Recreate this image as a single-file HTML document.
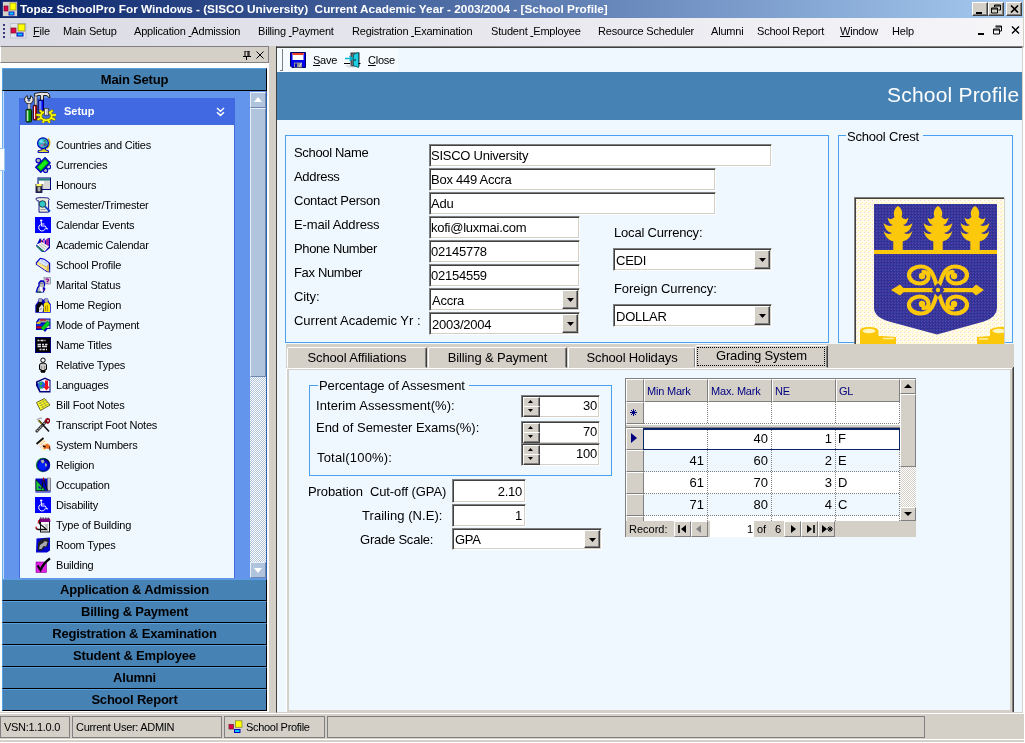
<!DOCTYPE html>
<html>
<head>
<meta charset="utf-8">
<title>Topaz SchoolPro</title>
<style>
*{box-sizing:border-box;margin:0;padding:0}
html,body{width:1025px;height:743px;overflow:hidden;background:#fff}
body{font-family:"Liberation Sans",sans-serif;font-size:11px;color:#000;position:relative}
.a{position:absolute}
.t{position:absolute;white-space:nowrap;line-height:1}
u{text-decoration:underline}
#win{left:0;top:0;width:1024px;height:742px;background:#d4d0c8;will-change:transform}
#title{left:0;top:0;width:1023px;height:18px;background:linear-gradient(90deg,#0a246a 0%,#a6caf0 100%)}
#title .t{color:#fff;font-weight:bold;font-size:11.8px;top:4px}
.wb{position:absolute;top:2px;width:16px;height:14px;background:#d4d0c8;border:1px solid;border-color:#fff #404040 #404040 #fff;box-shadow:inset -1px -1px 0 #808080}
#menu{left:0;top:18px;width:1023px;height:28px;background:linear-gradient(90deg,#dbdbe5 0%,#f6f5f8 100%)}
#menu .t{top:8px;font-size:11px;letter-spacing:-.2px}
/* left dock */
#dockhdr{left:0;top:46px;width:269px;height:17px;background:#d4d0c8;border:1px solid;border-color:#808080 #808080 #808080 #fff}
.nb{position:absolute;left:4px;width:263px;height:22px;background:#4682b4;border:1px solid;border-color:#5aa0e0 #000 #000 #5aa0e0;text-align:center;font-weight:bold;font-size:13px;line-height:19px;letter-spacing:-.2px}
.li{position:absolute;left:56px;font-size:11px;white-space:nowrap;line-height:1;letter-spacing:-.2px;margin-top:1px}
.ic{position:absolute;left:35px;width:16px;height:16px}
/* form */
.lb{position:absolute;white-space:nowrap;line-height:1;font-size:13px}
.tb{position:absolute;background:#fff;border:1px solid;border-color:#808080 #fff #fff #808080;box-shadow:inset 1px 1px 0 #404040,inset -1px -1px 0 #d4d0c8;height:23px;font-size:13px;line-height:20px;padding:1px 1px 0 1px;white-space:nowrap;overflow:hidden;letter-spacing:-.25px}
.tb.cb{line-height:22px;padding-left:2px}
.tb.r{text-align:right;padding-right:3px}
.dd{position:absolute;right:1px;top:1px;width:16px;height:19px;background:#d4d0c8;border:1px solid;border-color:#fff #404040 #404040 #fff;box-shadow:inset -1px -1px 0 #808080}
.dd:after{content:"";position:absolute;left:4px;top:7px;width:7px;height:4px;background:#000;clip-path:polygon(0 0,100% 0,50% 100%)}
.gb{position:absolute;border:1px solid #4aa0ee}
.gb>span{position:absolute;top:-8px;background:#f0f8ff;font-size:13px;line-height:1;padding:0 1px;white-space:nowrap}
.tab{position:absolute;top:347px;height:21px;background:#d4d0c8;border:1px solid;border-color:#fff #404040 transparent #fff;border-radius:2px 2px 0 0;box-shadow:inset -1px 0 0 #808080;font-size:13px;text-align:center;line-height:19px;white-space:nowrap;letter-spacing:-.15px}
.tab.sel{top:345px;height:23px;line-height:19px;z-index:2}
.tab.sel i{position:absolute;left:1px;top:1px;right:2px;bottom:1px;border:1px dotted #000}
.tb.nu{padding-left:17px;height:23px;line-height:18px;padding-right:2px}
.nu b{position:absolute;left:1px;top:1px;width:16px;height:18px}
.nu b:before,.nu b:after{content:"";position:absolute;left:0;width:15px;height:9px;background:#d4d0c8;border:1px solid;border-color:#fff #404040 #404040 #fff;box-shadow:inset -1px -1px 0 #808080}
.nu b:before{top:0}.nu b:after{top:9px}
.nu i{position:absolute;left:6px;width:5px;height:3px;background:#000;z-index:3}
.nu i.u{top:4px;clip-path:polygon(50% 0,100% 100%,0 100%)}.nu i.d{top:13px;clip-path:polygon(0 0,100% 0,50% 100%)}
.hd{position:absolute;left:644px;width:256px;height:1px;background:repeating-linear-gradient(90deg,#808080 0 1px,transparent 1px 2px)}
.vd{position:absolute;top:402px;width:1px;height:119px;background:repeating-linear-gradient(180deg,#808080 0 1px,transparent 1px 2px)}
.gh{position:absolute;top:379px;height:23px;background:#d4d0c8;border:1px solid;border-color:#fff #808080 #808080 #fff;color:#000080;font-size:11px;line-height:23px;padding-left:2px;white-space:nowrap;letter-spacing:-.2px}
.rs{position:absolute;left:626px;width:18px;background:#d4d0c8;border:1px solid;border-color:#fff #808080 #808080 #fff}
.gc{position:absolute;width:60px;text-align:right;font-size:13px;line-height:1}
.gl{position:absolute;font-size:13px;line-height:1}
.sb{position:absolute;width:16px;background:#d4d0c8;border:1px solid;border-color:#fff #808080 #808080 #fff}
.nvb{position:absolute;top:521px;width:17px;height:16px;background:#d4d0c8;border:1px solid;border-color:#fff #808080 #808080 #fff}
.sp{position:absolute;top:716px;height:22px;border:1px solid #808080;background:#d4d0c8}
.sp .t{font-size:11px;letter-spacing:-.3px}
</style>
</head>
<body>
<div id="win" class="a">

<!-- TITLE BAR -->
<div id="title" class="a">
  <svg class="a" style="left:2px;top:1px" width="16" height="16" viewBox="0 0 16 16">
    <rect x="0" y="0" width="16" height="16" fill="#d4d0c8"/>
    <rect x="0.5" y="0.5" width="15" height="15" fill="none" stroke="#2a3a80"/>
    <rect x="2" y="5" width="4" height="5" fill="#e0004c" stroke="#60002a" stroke-width=".6"/>
    <rect x="8" y="2" width="6" height="7" fill="#ffff00" stroke="#80801a" stroke-width=".6"/>
    <rect x="7" y="11" width="5" height="3" fill="#00c8ff" stroke="#0000c0" stroke-width=".8"/>
  </svg>
  <span class="t" style="left:20px">Topaz SchoolPro For Windows - (SISCO University)&nbsp; Current Academic Year - 2003/2004 - [School Profile]</span>
  <div class="wb" style="left:972px"><div class="a" style="left:3px;top:9px;width:6px;height:2px;background:#000"></div></div>
  <div class="wb" style="left:988px">
    <svg class="a" style="left:2px;top:1px" width="11" height="10" viewBox="0 0 11 10"><path d="M3.5 1h6v5h-2M3.5 2h6M3.5 1v2M.5 4h6v5h-6zM.5 5h6" fill="none" stroke="#000" stroke-width="1"/></svg>
  </div>
  <div class="wb" style="left:1006px">
    <svg class="a" style="left:3px;top:2px" width="9" height="8" viewBox="0 0 9 8"><path d="M1 .5l7 7M8 .5l-7 7" stroke="#000" stroke-width="1.6"/></svg>
  </div>
</div>

<!-- MENU BAR -->
<div id="menu" class="a">
  <div class="a" style="left:3px;top:6px;width:2px;height:14px;background:repeating-linear-gradient(180deg,#3a3a7a 0 2px,transparent 2px 4px)"></div><div class="a" style="left:4px;top:7px;width:2px;height:14px;background:repeating-linear-gradient(180deg,#fff 0 2px,transparent 2px 4px);z-index:-1"></div>
  <svg class="a" style="left:10px;top:5px" width="17" height="16" viewBox="0 0 17 16">
    <rect x=".5" y=".5" width="15.500" height="14.500" fill="#e4e4ec" stroke="#c4c4d0" stroke-width="1"/>
    <rect x="1" y="5" width="5" height="5" fill="#e0004c" stroke="#7a2030" stroke-width=".8"/>
    <rect x="8" y="1" width="7" height="7" fill="#ffff00" stroke="#8a8a30" stroke-width=".8"/>
    <rect x="7" y="10" width="6" height="3" fill="#00c8ff" stroke="#0000c0" stroke-width="1"/>
  </svg>
  <span class="t" style="left:33px"><u>F</u>ile</span>
  <span class="t" style="left:63px">Main Setup</span>
  <span class="t" style="left:134px">Application <u>&nbsp;</u>Admission</span>
  <span class="t" style="left:258px">Billing <u>&nbsp;</u>Payment</span>
  <span class="t" style="left:352px">Registration <u>&nbsp;</u>Examination</span>
  <span class="t" style="left:491px">Student <u>&nbsp;</u>Employee</span>
  <span class="t" style="left:598px">Resource Scheduler</span>
  <span class="t" style="left:711px">Alumni</span>
  <span class="t" style="left:757px">School Report</span>
  <span class="t" style="left:840px"><u>W</u>indow</span>
  <span class="t" style="left:892px">Help</span>
  <div class="a" style="left:978px;top:15px;width:6px;height:2px;background:#000"></div>
  <svg class="a" style="left:993px;top:7px" width="10" height="10" viewBox="0 0 10 10"><path d="M2.5 1h6v5h-2M2.5 2h6M.5 4h6v5h-6zM.5 5h6" fill="none" stroke="#000" stroke-width="1"/></svg>
  <svg class="a" style="left:1011px;top:8px" width="9" height="8" viewBox="0 0 9 8"><path d="M1 .5l7 7M8 .5l-7 7" stroke="#000" stroke-width="1.4"/></svg>
</div>

<!-- LEFT DOCK -->
<div id="dockhdr" class="a"></div>
<svg width="0" height="0" style="position:absolute"><defs>
<symbol id="wc" viewBox="0 0 16 16"><rect width="16" height="16" fill="#0000ff"/><circle cx="6.2" cy="3.6" r="1.2" fill="#fff"/><path d="M6.3 5v4h4l1.6 3.2l1.2-.6M6.3 7h3" fill="none" stroke="#fff" stroke-width="1"/><path d="M5.4 7.6a3.4 3.4 0 1 0 5 3.6" fill="none" stroke="#fff" stroke-width="1"/></symbol>
<symbol id="i0" viewBox="0 0 16 16"><path d="M3 15.600h10.500v-1.800l-3-1v-2h-3.500v2l-4 1z" fill="#c8c400" stroke="#0000c0" stroke-width="1"/><path d="M4.500 14.300h7" stroke="#f0f060" stroke-width=".8"/><path d="M13 1.500a6.500 6.500 0 0 1-1.500 10" fill="none" stroke="#c8b000" stroke-width="1.600"/><circle cx="8" cy="6.200" r="5.400" fill="#28b4bc" stroke="#0000c0" stroke-width="1.200"/><circle cx="6.200" cy="4.300" r="1.700" fill="#70e0f8"/><circle cx="10" cy="7.600" r="1.700" fill="#585878"/><circle cx="6.800" cy="8.400" r="1.200" fill="#d060c8"/><circle cx="10.200" cy="3.800" r="1" fill="#408858"/><circle cx="8.500" cy="5.800" r=".8" fill="#e8a0e0"/></symbol>
<symbol id="i1" viewBox="0 0 16 16"><circle cx="3.300" cy="3.600" r="2.300" fill="#b0b0b0" stroke="#0000c0" stroke-width="1.100"/><circle cx="13.600" cy="9.800" r="2.100" fill="#c8c8c8" stroke="#0000c0" stroke-width="1.100"/><circle cx="10.600" cy="13.500" r="2.100" fill="#b0b0b0" stroke="#0000c0" stroke-width="1.100"/><path d="M10 .8L15 5.800L5.800 15.200L.8 10.200z" fill="#00b400" stroke="#0000c0" stroke-width="1.500"/><path d="M10 3.400L12.400 5.800L5.800 12.600L3.400 10.200z" fill="#18f018"/></symbol>
<symbol id="i2" viewBox="0 0 16 16"><rect x="3" y="1" width="12.5" height="11.5" fill="#d8d8d8" stroke="#000080" stroke-width="1"/><rect x="3.5" y="1.5" width="11.5" height="2" fill="#208080"/><rect x="4" y="4" width="5" height="3" fill="#fff"/><rect x="1" y="7.5" width="6" height="8" fill="#303040" stroke="#000040" stroke-width=".8"/><rect x="1.3" y="7" width="5.4" height="2.2" fill="#ffff60"/><path d="M2.5 11h3M2.5 13h3M4 10v4.5" stroke="#e0e0e0" stroke-width=".9"/></symbol>
<symbol id="i3" viewBox="0 0 16 16"><path d="M1 1.5c2-1.4 9-.8 12-.5c1.4.4 1.5 2 .6 2.6v11.600h-9.600v-11.200c-1.5.2-3-.5-3-2.500z" fill="#ececdc" stroke="#000080" stroke-width=".9"/><circle cx="7.5" cy="7" r="3.3" fill="#30c8c8" stroke="#203040" stroke-width=".9"/><path d="M10 9.500l5 5" stroke="#1040d0" stroke-width="1.8"/><path d="M5.5 12.500h5" stroke="#888" stroke-width=".8"/></symbol>
<symbol id="i4" viewBox="0 0 16 16"><use href="#wc"/></symbol>
<symbol id="i5" viewBox="0 0 16 16"><path d="M5 1l2 3l2-3l2 3l2-3h2v10l-5 4h-3l-6-6l1-2z" fill="#0000c0"/><path d="M6 2l1.5 4l-2 2z" fill="#e04020"/><path d="M11 2.500l3-1.500v9l-3 1z" fill="#a020a0"/><path d="M8 3l2-1v6l-2 1z" fill="#d060d0"/><path d="M1.5 7.500l5.5-2.500l7 4.500l-4.5 5z" fill="#f4f4f0"/><path d="M2 8.500l7 5.500l-1 1l-6.5-5.500z" fill="#20a040"/><path d="M4 7.500l6 4.500M6 6.500l6 4" stroke="#a0a0a0" stroke-width=".7"/></symbol>
<symbol id="i6" viewBox="0 0 16 16"><path d="M.8 5.500L5 .8l4.500 1l5.700 4.200v9.500l-3.500-.5L.8 7.500z" fill="#0000c0"/><path d="M5.300 2l4 .8l4.500 3.500l-2 3.800L3 5z" fill="#dce8ff"/><path d="M6 3.500l6 3.500" stroke="#a8c0f0" stroke-width=".8"/><path d="M1.800 6l1.500-1.300l8.200 5.300l2.200-3.500l.5 8l-2.200-.2L1.800 7.300z" fill="#f8e27a"/><path d="M11.700 10l2-3.300l.5 7.800l-2.200-.2z" fill="#d4b848"/><path d="M2.500 7l8.500 5.800" stroke="#fff4b0" stroke-width=".8"/></symbol>
<symbol id="i7" viewBox="0 0 16 16"><rect x="9" y=".5" width="6.500" height="6.500" fill="#c8c8c8" stroke="#8888a8" stroke-width=".7"/><path d="M10.800 2.600q1.400-1.600 2.700 0q.2 1.200-1.300 2v.7M12.200 6v.6" stroke="#a000a0" stroke-width="1.200" fill="none"/><path d="M.5 15.600l1.500-5l1.300-1.800v-3l2-2.600h3.200l1.600 2.600v2.800l-.8 1.400l1.200 1.800l-1.700 3.800z" fill="#0000c0"/><path d="M2.200 15l1-4l1.500-1.500v-3l1.200-1.500h2l1 1.500v3l-1.500 2.500l1.200 1.200l-1.200 1.800z" fill="#b8b8b8"/><path d="M4.500 9.500l1.300 5.500h1.700v-4.500z" fill="#fff"/><path d="M5 6.500h3" stroke="#707070" stroke-width=".8"/><path d="M2 15h4.500" stroke="#004040" stroke-width="1.200"/><path d="M8.500 12.500l1.500 1" stroke="#a000a0" stroke-width="1"/></symbol>
<symbol id="i8" viewBox="0 0 16 16"><path d="M.3 15.700v-7.500l2.400-3.400l1-3.300h3.200l1.400 1.500l1.400-1.500h3.200l1 3.300l1.800 2.200v8.700z" fill="#0000c0"/><circle cx="5.300" cy="3.400" r="1.900" fill="#a8a8a8"/><circle cx="11.300" cy="3.400" r="1.900" fill="#a8a8a8"/><path d="M1.300 15v-6.500l2.600-3.200h3l1.600 2.700v7z" fill="#080808"/><path d="M4 11l3-3.800l1.600 3.300l-1 4.500h-3.600z" fill="#e8e8e8"/><path d="M4.500 12.500l2.500-1" stroke="#707070" stroke-width=".8"/><path d="M8.800 15v-8l1.500-1.700h2.700l2 2.700v7z" fill="#ffe400"/><path d="M12.300 8v6.500M10.500 9v5" stroke="#907000" stroke-width=".8"/></symbol>
<symbol id="i9" viewBox="0 0 16 16"><path d="M3.5 1.500h12v10.500h-3l-2.5 3l-1.5-2h-7.500v-8z" fill="#0000c0"/><path d="M4.5 2.500h10v3h-12z" fill="#a0a0a0"/><path d="M5 3h6" stroke="#e00000" stroke-width="1.2"/><rect x="1.5" y="5.2" width="4" height="1.6" fill="#ffe000"/><rect x="1.5" y="7.2" width="7" height="1.6" fill="#0030e0"/><rect x="1.5" y="9.4" width="6" height="2" fill="#e00000"/><rect x="10" y="8.5" width="4.5" height="2.5" fill="#c8c8c8"/><path d="M12.5 4l2.5 2.500l-6.5 7l-2.5-2.500z" fill="#00d020" stroke="#008000" stroke-width=".5"/></symbol>
<symbol id="i10" viewBox="0 0 16 16"><rect x=".5" y=".5" width="15" height="15" fill="#000" stroke="#000080"/><path d="M2.500 3.500h2M5.500 3.500h3M9.500 3.500h1M2.500 7.500h3.500M7 7.500h2M10 7.500h2.500M2.500 9.500h3.500M7 9.500h5M4.500 12.500h2M7.500 12.500h2.500M11 12.500h1" stroke="#e0e0e0" stroke-width="1.700"/></symbol>
<symbol id="i11" viewBox="0 0 16 16"><circle cx="8" cy="3.2" r="2.2" fill="#fff" stroke="#000" stroke-width="1"/><path d="M4.5 12.500v-4.500q0-2 3.5-2q3.5 0 3.5 2v4.500h-1.500v2.500h-4v-2.500z" fill="#c8c8c8" stroke="#000" stroke-width="1"/><rect x="6" y="13" width="4" height="2.5" fill="#000"/><path d="M6.5 9v4M9.5 9v4" stroke="#808080" stroke-width=".7"/></symbol>
<symbol id="i12" viewBox="0 0 16 16"><path d="M1 4.500l9-4l5.5 2.500v12.500h-11l-3.5-7z" fill="#000080"/><path d="M2.5 5.500l7.5-3.500l4.5 2v10h-9z" fill="#f4f4f4"/><circle cx="6.5" cy="8" r="3.6" fill="#2060e0"/><path d="M4 6.500q2-2 3.5-.5q-.5 2-2 2.500zM4.5 10q1.5-1 3 .5q-1 1.5-2.5 1z" fill="#20c040"/><path d="M10 3.500h3v6h1.800l-3.3 4l-3.3-4h1.800z" fill="#f01020"/></symbol>
<symbol id="i13" viewBox="0 0 16 16"><path d="M1.5 5.500l8-4l5.5 6.500l-9.5 5.500z" fill="#ffff20" stroke="#404020" stroke-width=".8"/><path d="M3.5 7l8-4.200M4.8 9l8.2-4.400M6 11l8.2-4.600M4.5 4.500l4 6.800M7.5 3l4.2 6.8" stroke="#909040" stroke-width=".7"/></symbol>
<symbol id="i14" viewBox="0 0 16 16"><path d="M1 15l10-10.5" stroke="#303030" stroke-width="2.6"/><path d="M1.8 14.200l9-9.5" stroke="#c0c0c0" stroke-width="1.2" stroke-dasharray="1.5 1"/><path d="M4 3.500l10 11" stroke="#101010" stroke-width="1.5"/><path d="M2 3q2.5-2.5 5-1.5" stroke="#b0b0b0" stroke-width="1.6" fill="none"/><path d="M3.5 3.500l3.5 3.5" stroke="#807000" stroke-width="1.2"/><path d="M10.5 2l2-1.200l2.5 1.200v3l-2 2l-2.5-1.200l-.8-2z" fill="#900010"/><circle cx="13" cy="3.8" r="1" fill="#e0d0d0"/></symbol>
<symbol id="i15" viewBox="0 0 16 16"><path d="M5.5 1.500l5 2l3 7l-5.5 4l-4.5-8z" fill="#fff0c0"/><path d="M1.5 7l7-6" stroke="#101010" stroke-width="1.8"/><path d="M4.5 9l5.5-5M5.5 10.500l3.5-3" stroke="#d060d0" stroke-width=".7" stroke-dasharray="1 1"/><path d="M8 9l4.5-2.500l3 2.500l-1 3l-3.5-.5l-2 1z" fill="#f07020"/><path d="M8 8.800l2.5 1.4" stroke="#101010" stroke-width="1.5"/><path d="M14.5 9.500l.5 4" stroke="#202020" stroke-width="1"/></symbol>
<symbol id="i16" viewBox="0 0 16 16"><circle cx="8" cy="8" r="7.2" fill="#108030"/><circle cx="8.6" cy="8" r="6.6" fill="#0000c0"/><circle cx="7.5" cy="9" r="4" fill="#0020ff"/><path d="M5.5 3.500l3-1l1 2.500l-1.5 1.500l-1.5-1zM10 6l2 1l-.5 3l-1.5-1z" fill="#b0b0a0"/><path d="M9 2q4 .5 5 4" stroke="#000030" stroke-width="1.2" fill="none"/></symbol>
<symbol id="i17" viewBox="0 0 16 16"><rect x=".5" y="1.5" width="15" height="14" fill="#0000c0"/><path d="M1 3v10.500h9.500z" fill="#20d040" stroke="#003000" stroke-width=".8"/><path d="M3.5 8.500v3h3z" fill="#0000c0"/><rect x="12.5" y="1" width="3" height="12.5" fill="#c8c8c8" stroke="#606060" stroke-width=".5"/><path d="M8.5 1.500l-2 11M8.5 1.500l4 12" stroke="#101010" stroke-width="1"/><path d="M8.5 .5v3" stroke="#c00000" stroke-width="1.2"/><path d="M1 14.500h14" stroke="#8080c0" stroke-width=".8"/></symbol>
<symbol id="i18" viewBox="0 0 16 16"><use href="#wc"/></symbol>
<symbol id="i19" viewBox="0 0 16 16"><rect x="5.5" y="4" width="9" height="11" fill="#f4f4f4" stroke="#101010" stroke-width="1"/><path d="M4.5 1.500h10.500l.5 3.500h-11.500z" fill="#800080"/><path d="M5 1l10 .2" stroke="#101010" stroke-width="1" stroke-dasharray="1.5 1"/><path d="M5 2.500q-2 3 1 5.500q3 2 5.5 4.500h-8.500q-2.5-1-1.5-2" fill="none" stroke="#101010" stroke-width="1.3"/><path d="M1.2 9.500q-.8 2 1.3 3M4 3l-1 3.5" stroke="#e00000" stroke-width="1" fill="none"/><path d="M9 7h4v6z" fill="#c0c0c0"/></symbol>
<symbol id="i20" viewBox="0 0 16 16"><path d="M1.5 1.500l13.5-1v13l-3 2h-11z" fill="#0000d0"/><path d="M3 6l3-3.500l6-1.500l2 2.500l-1.5 6l-3 1l-2.5 3h-4z" fill="#202028"/><path d="M5 8l3-2l2-2l2.5 1l-1.5 4.500l-2.5-.5l-2 3h-2.500z" fill="#a8a8b0"/></symbol>
<symbol id="i21" viewBox="0 0 16 16"><rect x="1" y="5" width="10.5" height="10.5" fill="#e020e0" stroke="#8000a0" stroke-width=".6"/><path d="M2.5 8.500l3 4.500q3-7 9.5-11.5" fill="none" stroke="#000" stroke-width="2.2"/></symbol>
</defs></svg>
<div class="a" style="left:0;top:63px;width:269px;height:649px;background:#fff"></div>
<!-- dock header icons -->
<svg class="a" style="left:243px;top:51px" width="8" height="9" viewBox="0 0 8 9"><path d="M1.5 0h5M2 0v5M5 0v5M6 0v5M0 5.500h8M3.5 6v3" stroke="#000" stroke-width="1" fill="none"/></svg>
<svg class="a" style="left:256px;top:51px" width="8" height="8" viewBox="0 0 8 8"><path d="M.5 .5l7 7M7.5 .5l-7 7" stroke="#000" stroke-width="1"/></svg>
<!-- nav -->
<div class="nb" style="top:68px;left:2px;width:265px;height:23px;line-height:22px">Main Setup</div>
<div class="a" style="left:2px;top:91px;width:265px;height:488px;background:#6495ed;border-left:1px solid #6ab0f0;border-right:1px solid #3060b0"></div><div class="a" style="left:3px;top:91px;width:1px;height:488px;background:#c4dcf8"></div>
<div class="a" style="left:19px;top:98px;width:216px;height:27px;background:#4169e1"></div>
<div class="a" style="left:19px;top:125px;width:216px;height:453px;background:#f0f8ff;border:solid #4169e1;border-width:0 1px"></div>
<div class="a" style="left:0;top:148px;width:5px;height:23px;background:#fff;border:1px solid #9cc8f4;border-left:0"></div>
<span class="t" style="left:64px;top:106px;color:#fff;font-weight:bold;font-size:11px">Setup</span>
<svg class="a" style="left:216px;top:107px" width="9" height="10" viewBox="0 0 9 10"><path d="M1 1l3.5 3.200l3.5-3.200M1 5.200l3.5 3.200l3.5-3.200" fill="none" stroke="#fff" stroke-width="1.500"/></svg>
<!-- setup icon -->
<svg class="a" style="left:24px;top:91px" width="32" height="32" viewBox="0 0 32 32">
  <path d="M10.500 5.500V2.500Q17 .5 23.500 1.500Q26 3 26 6.500L24.500 6.500Q24 4.500 22 4.500H19.500V9.500H16.600V4.500H13.500L12.500 6z" fill="#e4e4e4" stroke="#202020" stroke-width="1"/>
  <rect x="10.400" y="5" width="2.600" height="9.500" fill="#d0d0d0" stroke="#404040" stroke-width=".7"/>
  <path d="M3.300 4.600A4.300 4.300 0 1 0 6.500 4.600V7.500H3.300z" fill="#e8e8e8" stroke="#202020" stroke-width="1"/><circle cx="4.900" cy="9.200" r="1.100" fill="#4169e1" stroke="#404040" stroke-width=".6"/>
  <rect x="3.900" y="12.800" width="2.200" height="6" fill="#e0e0e0" stroke="#505050" stroke-width=".6"/>
  <rect x="2" y="18.400" width="5.500" height="12.600" rx=".8" fill="#008000" stroke="#102010" stroke-width="1"/><path d="M3.300 19.500V30" stroke="#fff" stroke-width="1"/><path d="M4.400 19.500V30" stroke="#40c040" stroke-width="1"/>
  <rect x="9.200" y="14.300" width="3.800" height="14.700" rx=".8" fill="#c00000" stroke="#301010" stroke-width="1"/><path d="M10.600 15.300V28" stroke="#fff" stroke-width="1"/>
  <rect x="14.800" y="9.200" width="4.700" height="12" fill="#0000ff" stroke="#000060" stroke-width="1"/><path d="M16 10V20" stroke="#fff" stroke-width=".9"/><path d="M17 10V20" stroke="#60a0ff" stroke-width=".9"/>
  <g fill="none" stroke-linecap="round"><path d="M27.6 24.3L31.3 23.9M27.0 27.1L30.2 28.3M24.1 28.9L25.3 31.2M20.3 28.9L19.1 31.2M17.4 27.1L14.2 28.3M16.8 24.3L13.1 23.9M18.7 21.8L16.3 19.9M22.2 20.8L22.2 18.4M25.7 21.8L28.1 19.9" stroke="#808000" stroke-width="3"/><ellipse cx="22.2" cy="25.0" rx="5.500" ry="4.200" stroke="#808000" stroke-width="3"/><path d="M27.6 24.3L31.3 23.9M27.0 27.1L30.2 28.3M24.1 28.9L25.3 31.2M20.3 28.9L19.1 31.2M17.4 27.1L14.2 28.3M16.8 24.3L13.1 23.9M18.7 21.8L16.3 19.9M22.2 20.8L22.2 18.4M25.7 21.8L28.1 19.9" stroke="#ffff00" stroke-width="1.600"/><ellipse cx="22.2" cy="25.0" rx="5.500" ry="4.200" stroke="#ffff00" stroke-width="1.500"/></g>
  <rect x="20.400" y="17.500" width="4.200" height="6.800" fill="#c4c4c4" stroke="#404040" stroke-width=".8"/><path d="M21.600 18.200V23.600" stroke="#fff" stroke-width=".9"/>
</svg>
<!-- scrollbar -->
<div class="a" style="left:250px;top:92px;width:16px;height:486px;background:repeating-conic-gradient(#b0c4de 0 25%,#fff 0 50%) 0 0/2px 2px"></div>
<div class="a" style="left:250px;top:92px;width:16px;height:16px;background:#b0c4de;border:1px solid;border-color:#e8eef8 #7088b0 #7088b0 #e8eef8"></div>
<div class="a" style="left:254px;top:97px;border:4px solid transparent;border-bottom:5px solid #fff;border-top:0"></div>
<div class="a" style="left:250px;top:108px;width:16px;height:269px;background:#b0c4de;border:1px solid;border-color:#e8eef8 #7088b0 #7088b0 #e8eef8"></div>
<div class="a" style="left:250px;top:562px;width:16px;height:16px;background:#b0c4de;border:1px solid;border-color:#e8eef8 #7088b0 #7088b0 #e8eef8"></div>
<div class="a" style="left:254px;top:568px;border:4px solid transparent;border-top:5px solid #fff;border-bottom:0"></div>
<!-- items -->
<svg class="ic" style="top:137px" viewBox="0 0 16 16"><use href="#i0"/></svg><span class="li" style="top:139px">Countries and Cities</span>
<svg class="ic" style="top:157px" viewBox="0 0 16 16"><use href="#i1"/></svg><span class="li" style="top:159px">Currencies</span>
<svg class="ic" style="top:177px" viewBox="0 0 16 16"><use href="#i2"/></svg><span class="li" style="top:179px">Honours</span>
<svg class="ic" style="top:197px" viewBox="0 0 16 16"><use href="#i3"/></svg><span class="li" style="top:199px">Semester/Trimester</span>
<svg class="ic" style="top:217px" viewBox="0 0 16 16"><use href="#i4"/></svg><span class="li" style="top:219px">Calendar Events</span>
<svg class="ic" style="top:237px" viewBox="0 0 16 16"><use href="#i5"/></svg><span class="li" style="top:239px">Academic Calendar</span>
<svg class="ic" style="top:257px" viewBox="0 0 16 16"><use href="#i6"/></svg><span class="li" style="top:259px">School Profile</span>
<svg class="ic" style="top:277px" viewBox="0 0 16 16"><use href="#i7"/></svg><span class="li" style="top:279px">Marital Status</span>
<svg class="ic" style="top:297px" viewBox="0 0 16 16"><use href="#i8"/></svg><span class="li" style="top:299px">Home Region</span>
<svg class="ic" style="top:317px" viewBox="0 0 16 16"><use href="#i9"/></svg><span class="li" style="top:319px">Mode of Payment</span>
<svg class="ic" style="top:337px" viewBox="0 0 16 16"><use href="#i10"/></svg><span class="li" style="top:339px">Name Titles</span>
<svg class="ic" style="top:357px" viewBox="0 0 16 16"><use href="#i11"/></svg><span class="li" style="top:359px">Relative Types</span>
<svg class="ic" style="top:377px" viewBox="0 0 16 16"><use href="#i12"/></svg><span class="li" style="top:379px">Languages</span>
<svg class="ic" style="top:397px" viewBox="0 0 16 16"><use href="#i13"/></svg><span class="li" style="top:399px">Bill Foot Notes</span>
<svg class="ic" style="top:417px" viewBox="0 0 16 16"><use href="#i14"/></svg><span class="li" style="top:419px">Transcript Foot Notes</span>
<svg class="ic" style="top:437px" viewBox="0 0 16 16"><use href="#i15"/></svg><span class="li" style="top:439px">System Numbers</span>
<svg class="ic" style="top:457px" viewBox="0 0 16 16"><use href="#i16"/></svg><span class="li" style="top:459px">Religion</span>
<svg class="ic" style="top:477px" viewBox="0 0 16 16"><use href="#i17"/></svg><span class="li" style="top:479px">Occupation</span>
<svg class="ic" style="top:497px" viewBox="0 0 16 16"><use href="#i18"/></svg><span class="li" style="top:499px">Disability</span>
<svg class="ic" style="top:517px" viewBox="0 0 16 16"><use href="#i19"/></svg><span class="li" style="top:519px">Type of Building</span>
<svg class="ic" style="top:537px" viewBox="0 0 16 16"><use href="#i20"/></svg><span class="li" style="top:539px">Room Types</span>
<svg class="ic" style="top:557px" viewBox="0 0 16 16"><use href="#i21"/></svg><span class="li" style="top:559px">Building</span>
<div class="nb" style="top:579px;left:2px;width:265px">Application &amp; Admission</div>
<div class="nb" style="top:601px;left:2px;width:265px">Billing &amp; Payment</div>
<div class="nb" style="top:623px;left:2px;width:265px">Registration &amp; Examination</div>
<div class="nb" style="top:645px;left:2px;width:265px">Student &amp; Employee</div>
<div class="nb" style="top:667px;left:2px;width:265px">Alumni</div>
<div class="nb" style="top:689px;left:2px;width:265px">School Report</div>
<!--LEFT-END-->

<!-- SPLITTER + MDI -->
<div class="a" style="left:276px;top:46px;width:747px;height:667px;background:#f0f8ff;border:1px solid;border-color:#606060 #d4d0c8 #d4d0c8 #404040"></div>
<div class="a" style="left:277px;top:46px;width:745px;height:1px;background:#808080"></div>
<div class="a" style="left:277px;top:47px;width:745px;height:1px;background:#404040"></div>
<div class="a" style="left:1023px;top:48px;width:1px;height:666px;background:#fff"></div>
<!-- toolbar -->
<div class="a" style="left:277px;top:48px;width:121px;height:24px;background:#f6fbff"></div>
<div class="a" style="left:282px;top:49px;width:1px;height:21px;background:#808080"></div>
<div class="a" style="left:280px;top:70px;width:3px;height:1px;background:#808080"></div>
<svg class="a" style="left:290px;top:52px" width="16" height="16" viewBox="0 0 16 16"><path d="M.5 .5h15v15h-13.500l-1.500-1.500z" fill="#0000f0" stroke="#000060" stroke-width="1"/><rect x="2.500" y="1" width="11" height="7" fill="#fff"/><rect x="2.500" y="1" width="11" height="2" fill="#f04020"/><rect x="4" y="10.500" width="8" height="5" fill="#909090"/><rect x="5" y="11.500" width="2" height="3.500" fill="#0000c0"/><path d="M9 15l2.500-4" stroke="#e0e0e0" stroke-width="1"/></svg>
<span class="t" style="left:313px;top:55px;font-size:11px;letter-spacing:-.25px"><u>S</u>ave</span>
<svg class="a" style="left:344px;top:51px" width="17" height="18" viewBox="0 0 17 18"><rect x="7" y="2" width="8" height="13" fill="#707070" stroke="#303030" stroke-width="1"/><path d="M9.500 3.500l5-2v15l-5-2z" fill="#20d0e0" stroke="#006070" stroke-width=".8"/><path d="M1 7.500h7M5.500 5l3 2.500l-3 2.500" fill="none" stroke="#00b0d0" stroke-width="1.400"/><path d="M0 12.500h6M14.500 12.500h2" stroke="#000" stroke-width="1"/><path d="M3 14v2M5 14v3M7 14v2M9 15v2" stroke="#c0c0c0" stroke-width=".8"/><circle cx="11" cy="9" r=".8" fill="#000"/></svg>
<span class="t" style="left:368px;top:55px;font-size:11px;letter-spacing:-.25px"><u>C</u>lose</span>
<!-- blue header -->
<div class="a" style="left:277px;top:72px;width:745px;height:48px;background:#4682b4"></div>
<span class="t" style="left:887px;top:83.5px;color:#fff;font-size:21px;letter-spacing:.2px">School Profile</span>
<!-- group box 1 -->
<div class="gb" style="left:285px;top:135px;width:544px;height:208px"></div>
<span class="lb" style="left:294px;top:146px;letter-spacing:-0.34px">School Name</span>
<span class="lb" style="left:294px;top:170px;letter-spacing:-0.31px">Address</span>
<span class="lb" style="left:294px;top:194px;letter-spacing:-0.26px">Contact Person</span>
<span class="lb" style="left:294px;top:218px;letter-spacing:-0.14px">E-mail Address</span>
<span class="lb" style="left:294px;top:242px;letter-spacing:-0.38px">Phone Number</span>
<span class="lb" style="left:294px;top:266px;letter-spacing:-0.35px">Fax Number</span>
<span class="lb" style="left:294px;top:290px;letter-spacing:-0.1px">City:</span>
<span class="lb" style="left:294px;top:314px;letter-spacing:-0.02px">Current Academic Yr :</span>
<div class="tb" style="left:429px;top:144px;width:343px">SISCO University</div>
<div class="tb" style="left:429px;top:168px;width:287px">Box 449 Accra</div>
<div class="tb" style="left:429px;top:192px;width:287px">Adu</div>
<div class="tb" style="left:429px;top:216px;width:151px">kofi@luxmai.com</div>
<div class="tb" style="left:429px;top:240px;width:151px">02145778</div>
<div class="tb" style="left:429px;top:264px;width:151px">02154559</div>
<div class="tb cb" style="left:429px;top:288px;width:151px">Accra<div class="dd"></div></div>
<div class="tb cb" style="left:429px;top:312px;width:151px">2003/2004<div class="dd"></div></div>
<span class="lb" style="left:614px;top:226px;letter-spacing:-0.18px">Local Currency:</span>
<div class="tb cb" style="left:613px;top:248px;width:159px">CEDI<div class="dd"></div></div>
<span class="lb" style="left:614px;top:282px;letter-spacing:-0.08px">Foreign Currency:</span>
<div class="tb cb" style="left:613px;top:304px;width:159px">DOLLAR<div class="dd"></div></div>
<!-- crest group -->
<div class="gb" style="left:838px;top:135px;width:175px;height:208px"><span style="left:7px;top:-6px;letter-spacing:-.2px;padding-right:4px">School Crest</span></div>
<div class="a" style="left:854px;top:197px;width:151px;height:147px;overflow:hidden;background:#fdfbe9">
<svg class="a" style="left:0;top:0" width="151" height="147" viewBox="854 197 151 147">
<defs>
<pattern id="dz" width="4" height="4" patternUnits="userSpaceOnUse"><rect width="4" height="4" fill="#fefce8"/><rect x="0" y="0" width="1" height="1" fill="#ffd0e4"/><rect x="2" y="2" width="1" height="1" fill="#fff29a"/><rect x="3" y="1" width="1" height="1" fill="#ffffff"/><rect x="1" y="3" width="1" height="1" fill="#fff6b8"/></pattern>
<pattern id="dzb" width="3" height="3" patternUnits="userSpaceOnUse"><rect width="3" height="3" fill="#36369a"/><rect x="0" y="0" width="1" height="1" fill="#4a4ab4"/><rect x="2" y="1" width="1" height="1" fill="#282c8c"/><rect x="1" y="2" width="1" height="1" fill="#5a3c9c"/></pattern>
<path id="tree" d="M0 0C3 2 5.500 6 3.500 11Q7 15 10.500 11.500Q9.500 18 5 19Q10 21.500 14.500 17Q12.500 26 6 27Q11 29.500 14.500 25Q12 34 4.700 35.500V45H-4.700V35.500Q-12 34 -14.500 25Q-11 29.500 -6 27Q-12.500 26 -14.500 17Q-10 21.500 -5 19Q-9.500 18 -10.500 11.500Q-7 15 -3.500 11C-5.500 6 -3 2 0 0Z" fill="#fcc80c"/>
<path id="spir" d="M1 1C-2 -5 -3 -12 -6 -17C-9 -22 -13 -23.500 -17 -23.500C-24 -23.500 -29 -19.500 -29 -15C-29 -10 -24 -6.500 -18 -6.500C-12.500 -6.500 -9.500 -10 -9.500 -13.500C-9.500 -16.500 -12 -18.200 -14.500 -18.200" fill="none" stroke="#fcc80c" stroke-width="4.200" stroke-linecap="round"/>
</defs>
<rect x="854" y="197" width="151" height="147" fill="url(#dz)"/>
<path d="M874 204H997V308Q997 317 984 321.500L937 334.500L889 321.500Q874 317 874 308Z" fill="url(#dzb)"/>
<rect x="874" y="250" width="123" height="4" fill="#fcc80c"/>
<use href="#tree" x="898" y="206"/><use href="#tree" x="938" y="206"/><use href="#tree" x="975" y="206"/>
<use href="#spir" transform="translate(938 290)"/>
<use href="#spir" transform="translate(938 290) scale(-1 1)"/>
<use href="#spir" transform="translate(938 290) scale(1 -1)"/>
<use href="#spir" transform="translate(938 290) scale(-1 -1)"/>
<circle cx="922" cy="276" r="3.200" fill="#fcc80c"/><circle cx="954" cy="276" r="3.200" fill="#fcc80c"/><circle cx="922" cy="304" r="3.200" fill="#fcc80c"/><circle cx="954" cy="304" r="3.200" fill="#fcc80c"/>
<path d="M891 290L900 284.500L903.500 288H972.500L976 284.500L984 290L976 295.500L972.500 292.200H903.500L900 295.500Z" fill="#fcc80c"/>
<path d="M938 283L944.500 290L938 297L931.500 290Z" fill="#36369a"/><circle cx="938" cy="290" r="2.200" fill="#fcc80c"/>
<!-- scroll ends -->
<path d="M860 344V331Q860 327 869 327Q878.500 327 878.500 331.500V336H883L896 337V344Z" fill="#fcc80c"/>
<ellipse cx="869" cy="331" rx="6.500" ry="2.200" fill="#fef6c0"/><path d="M883 338.500H894" stroke="#fef0a0" stroke-width="1.500"/>
<path d="M1005 344V327Q996 326 990 329.500V336L977 337V344Z" fill="#fcc80c"/>
<ellipse cx="999" cy="331" rx="6.500" ry="2.200" fill="#fef6c0"/><path d="M979 339H988" stroke="#fef0a0" stroke-width="1.500"/>
</svg>
<div class="a" style="left:0;top:0;width:151px;height:2px;background:#404040"></div><div class="a" style="left:0;top:0;width:2px;height:147px;background:#404040"></div><div class="a" style="left:0;top:0;width:151px;height:1px;background:#808080"></div><div class="a" style="left:0;top:0;width:1px;height:147px;background:#808080"></div><div class="a" style="right:0;top:0;width:1px;height:147px;background:#d4d0c8"></div>
</div>
<!--CREST-END-->
<!-- tab control -->
<div class="a" style="left:286px;top:344px;width:728px;height:368px;background:#d4d0c8"></div>
<div class="a" style="left:286px;top:368px;width:726px;height:344px;background:#fff"></div>
<div class="a" style="left:287px;top:369px;width:725px;height:343px;background:#d4d0c8"></div>
<div class="a" style="left:1012px;top:368px;width:1px;height:344px;background:#808080"></div>
<div class="a" style="left:1013px;top:367px;width:1px;height:345px;background:#404040"></div>
<div class="a" style="left:289px;top:370px;width:721px;height:340px;background:#f0f8ff"></div>
<div class="tab" style="left:287px;width:140px">School Affiliations</div>
<div class="tab" style="left:428px;width:139px">Billing &amp; Payment</div>
<div class="tab" style="left:568px;width:128px">School Holidays</div>
<div class="tab sel" style="left:695px;width:133px">Grading System<i></i></div>
<div class="gb" style="left:309px;top:385px;width:303px;height:91px"><span style="left:8px;top:-7px;letter-spacing:-.1px">Percentage of Assesment&nbsp;</span></div>
<span class="lb" style="left:316px;top:399px;letter-spacing:0.07px">Interim Assessment(%):</span>
<span class="lb" style="left:316px;top:421px;letter-spacing:-0.03px">End of Semester Exams(%):</span>
<span class="lb" style="left:317px;top:451px;letter-spacing:0.18px">Total(100%):</span>
<div class="tb r nu" style="left:521px;top:395px;width:79px">30<b></b><i class="u"></i><i class="d"></i></div>
<div class="tb r nu" style="left:521px;top:421px;width:79px">70<b></b><i class="u"></i><i class="d"></i></div>
<div class="tb r nu" style="left:521px;top:443px;width:79px">100<b></b><i class="u"></i><i class="d"></i></div>
<span class="lb" style="left:308px;top:485px;letter-spacing:-0.09px">Probation&nbsp; Cut-off (GPA)</span>
<span class="lb" style="left:362px;top:509px;letter-spacing:0.05px">Trailing (N.E):</span>
<span class="lb" style="left:360px;top:533px;letter-spacing:-0.22px">Grade Scale:</span>
<div class="tb r" style="left:452px;top:479px;width:74px;height:24px;line-height:22px">2.10</div>
<div class="tb r" style="left:452px;top:504px;width:74px">1</div>
<div class="tb cb" style="left:452px;top:528px;width:150px;height:22px;line-height:20px">GPA<div class="dd" style="height:18px"></div></div>
<!-- grid -->
<div class="a" style="left:625px;top:378px;width:291px;height:159px;background:#d4d0c8"></div>
<div class="a" style="left:625px;top:378px;width:1px;height:159px;background:#808080"></div>
<div class="a" style="left:625px;top:378px;width:291px;height:1px;background:#808080"></div>
<!-- cells bg -->
<div class="a" style="left:644px;top:402px;width:256px;height:22px;background:#fff"></div>
<div class="a" style="left:644px;top:428px;width:256px;height:93px;background:#f0f8ff"></div>
<div class="a" style="left:644px;top:428px;width:256px;height:22px;background:#fff"></div>
<div class="a" style="left:644px;top:472px;width:256px;height:22px;background:#fff"></div>
<div class="a" style="left:644px;top:516px;width:256px;height:5px;background:#fff"></div>
<!-- dotted lines -->
<div class="hd" style="top:423px"></div><div class="hd" style="top:449px"></div><div class="hd" style="top:471px"></div><div class="hd" style="top:493px"></div><div class="hd" style="top:515px"></div>
<div class="vd" style="left:707px"></div><div class="vd" style="left:771px"></div><div class="vd" style="left:835px"></div><div class="vd" style="left:899px"></div>
<!-- splitter band -->
<div class="a" style="left:626px;top:424px;width:274px;height:4px;background:#d4d0c8;border-top:1px solid #fff;border-bottom:1px solid #808080"></div>
<!-- header cells -->
<div class="gh" style="left:626px;width:18px"></div>
<div class="gh" style="left:644px;width:64px">Min Mark</div>
<div class="gh" style="left:708px;width:64px">Max. Mark</div>
<div class="gh" style="left:772px;width:64px">NE</div>
<div class="gh" style="left:836px;width:64px">GL</div>
<!-- row selectors -->
<div class="rs" style="top:402px;height:22px"></div>
<div class="rs" style="top:428px;height:22px"></div>
<div class="rs" style="top:450px;height:22px"></div>
<div class="rs" style="top:472px;height:22px"></div>
<div class="rs" style="top:494px;height:22px"></div>
<div class="rs" style="top:516px;height:5px;border-bottom:0"></div>
<svg class="a" style="left:630px;top:409px" width="7" height="7" viewBox="0 0 7 7"><path d="M3.500 0v7M0 3.500h7M1 1l5 5M6 1l-5 5" stroke="#000080" stroke-width="1"/></svg>
<div class="a" style="left:631px;top:433px;border:5px solid transparent;border-left:6px solid #000080;border-right:0"></div>
<!-- focus row -->
<div class="a" style="left:643px;top:428px;width:257px;height:22px;border:1px solid #0a246a;border-top-width:2px"></div>
<!-- cell text -->
<span class="gc" style="left:708px;top:432px">40</span><span class="gc" style="left:772px;top:432px">1</span><span class="gl" style="left:838px;top:432px">F</span>
<span class="gc" style="left:644px;top:454px">41</span><span class="gc" style="left:708px;top:454px">60</span><span class="gc" style="left:772px;top:454px">2</span><span class="gl" style="left:838px;top:454px">E</span>
<span class="gc" style="left:644px;top:476px">61</span><span class="gc" style="left:708px;top:476px">70</span><span class="gc" style="left:772px;top:476px">3</span><span class="gl" style="left:838px;top:476px">D</span>
<span class="gc" style="left:644px;top:498px">71</span><span class="gc" style="left:708px;top:498px">80</span><span class="gc" style="left:772px;top:498px">4</span><span class="gl" style="left:838px;top:498px">C</span>
<!-- grid scrollbar -->
<div class="a" style="left:900px;top:379px;width:16px;height:142px;background:repeating-conic-gradient(#d4d0c8 0 25%,#fff 0 50%) 0 0/2px 2px"></div>
<div class="sb" style="left:900px;top:379px;height:15px"></div>
<div class="a" style="left:904px;top:384px;border:4px solid transparent;border-bottom:4px solid #000;border-top:0"></div>
<div class="sb" style="left:900px;top:394px;height:73px"></div>
<div class="sb" style="left:900px;top:507px;height:14px"></div>
<div class="a" style="left:904px;top:512px;border:4px solid transparent;border-top:4px solid #000;border-bottom:0"></div>
<!-- nav bar -->
<div class="a" style="left:626px;top:521px;width:290px;height:16px;background:#d4d0c8"></div>
<span class="t" style="left:629px;top:524px;font-size:11px">Record:</span>
<div class="nvb" style="left:674px"></div><div class="nvb" style="left:691px"></div>
<div class="a" style="left:710px;top:521px;width:44px;height:16px;background:#fff"></div>
<span class="t" style="left:747px;top:524px;font-size:11px">1</span>
<span class="t" style="left:757px;top:524px;font-size:11px">of</span><span class="t" style="left:775px;top:524px;font-size:11px">6</span>
<div class="nvb" style="left:784px"></div><div class="nvb" style="left:801px"></div><div class="nvb" style="left:818px"></div>
<svg class="a" style="left:678px;top:525px" width="10" height="8" viewBox="0 0 10 8"><path d="M1 0v8" stroke="#000" stroke-width="1.600"/><path d="M8 0v8l-5-4z" fill="#000"/></svg>
<svg class="a" style="left:696px;top:525px" width="6" height="8" viewBox="0 0 6 8"><path d="M5 0v8l-5-4z" fill="#808080"/></svg>
<svg class="a" style="left:790px;top:525px" width="6" height="8" viewBox="0 0 6 8"><path d="M1 0v8l5-4z" fill="#000"/></svg>
<svg class="a" style="left:805px;top:525px" width="10" height="8" viewBox="0 0 10 8"><path d="M9 0v8" stroke="#000" stroke-width="1.600"/><path d="M2 0v8l5-4z" fill="#000"/></svg>
<svg class="a" style="left:821px;top:525px" width="12" height="8" viewBox="0 0 12 8"><path d="M1 0v8l5-4z" fill="#000"/><path d="M9 1v6M6 4h6M7 2l4 4M11 2l-4 4" stroke="#000" stroke-width="1"/></svg>
<!--TABPAGE-END-->
<!--RIGHT-END-->

<!-- STATUS -->
<div class="a" style="left:0;top:713px;width:1023px;height:1px;background:#fff"></div>
<div class="a" style="left:0;top:739px;width:1024px;height:1px;background:#fff"></div>
<div class="sp" style="left:0;width:70px"><span class="t" style="left:3px;top:5px">VSN:1.1.0.0</span></div>
<div class="sp" style="left:72px;width:150px"><span class="t" style="left:3px;top:5px">Current User: ADMIN</span></div>
<div class="sp" style="left:224px;width:101px">
<svg class="a" style="left:3px;top:3px" width="16" height="14" viewBox="0 0 16 14"><rect x="1" y="4.500" width="4.500" height="4.500" fill="#e0004c" stroke="#7a2030" stroke-width=".8"/><rect x="7.500" y=".8" width="6.500" height="6.500" fill="#ffff00" stroke="#8a8a30" stroke-width=".8"/><rect x="6.500" y="9.500" width="5.500" height="3" fill="#00c8ff" stroke="#0000c0" stroke-width="1"/></svg>
<span class="t" style="left:21px;top:5px">School Profile</span></div>
<div class="sp" style="left:327px;width:598px"></div>
<!--STATUS-END-->

</div>
</body>
</html>
